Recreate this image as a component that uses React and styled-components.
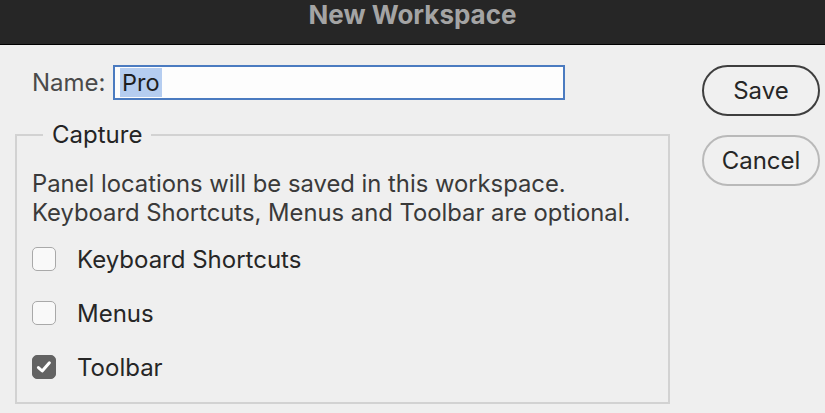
import React from "react";
import styled, { createGlobalStyle } from "styled-components";

const GlobalStyle = createGlobalStyle`
  html, body {
    margin: 0;
    padding: 0;
    background: #efefef;
  }
  #root {
    width: 825px;
    height: 413px;
    overflow: hidden;
  }
`;

const options = [
  { label: "Keyboard Shortcuts", checked: false },
  { label: "Menus", checked: false },
  { label: "Toolbar", checked: true },
];

const App = () => {
  return (
    <Wrapper>
      <GlobalStyle />
      <TitleBar>
        <span className="title">New Workspace</span>
      </TitleBar>
      <Content>
        <div className="left">
          <NameRow>
            <label>Name:</label>
            <NameField>
              <span className="selected">Pro</span>
            </NameField>
          </NameRow>
          <Capture>
            <legend>Capture</legend>
            <p className="desc">
              Panel locations will be saved in this workspace.
              <br />
              Keyboard Shortcuts, Menus and Toolbar are optional.
            </p>
            {options.map((opt) => (
              <OptionRow key={opt.label}>
                <Checkbox $checked={opt.checked}>
                  {opt.checked && (
                    <svg width="18" height="18" viewBox="0 0 18 18">
                      <path
                        d="M3.4 9.6 L7.2 13 L14.4 4.8"
                        fill="none"
                        stroke="#fff"
                        strokeWidth="3"
                        strokeLinecap="round"
                        strokeLinejoin="round"
                      />
                    </svg>
                  )}
                </Checkbox>
                <span>{opt.label}</span>
              </OptionRow>
            ))}
          </Capture>
        </div>
        <div className="right">
          <Button $primary>Save</Button>
          <Button>Cancel</Button>
        </div>
      </Content>
    </Wrapper>
  );
};

const Wrapper = styled.div`
  width: 825px;
  height: 413px;
  background: #efefef;
  font-family: "Inter", "Liberation Sans", sans-serif;
  color: #262626;
`;

const TitleBar = styled.div`
  height: 44px;
  background: #262626;
  border-bottom: 1px solid #000;
  display: flex;
  justify-content: center;
  align-items: flex-start;
  .title {
    font-size: 26px;
    font-weight: 700;
    color: #a4a4a4;
    line-height: 30px;
  }
`;

const Content = styled.div`
  display: flex;
  padding: 20px 0 0 15px;
  .left {
    width: 655px;
  }
  .right {
    margin-left: 32px;
    display: flex;
    flex-direction: column;
    gap: 19px;
  }
`;

const NameRow = styled.div`
  display: flex;
  align-items: center;
  padding-left: 17px;
  height: 35px;
  label {
    font-size: 24px;
    color: #4a4a4a;
    width: 81px;
  }
`;

const NameField = styled.div`
  box-sizing: border-box;
  width: 452px;
  height: 35px;
  border: 2px solid #4b7bc0;
  background: #fdfdfd;
  padding: 1px 5px;
  display: flex;
  align-items: stretch;
  .selected {
    background: #b5cdf0;
    font-size: 23.5px;
    line-height: 29px;
    padding: 0 2px;
    color: #1e1e1e;
  }
`;

const Capture = styled.fieldset`
  margin: 21px 0 0 0;
  padding: 0 0 0 15px;
  height: 283px;
  box-sizing: border-box;
  border: 2px solid #d2d2d2;
  legend {
    margin-left: 11px;
    padding: 0 9px;
    font-size: 24px;
    line-height: 28px;
    color: #242424;
  }
  .desc {
    margin: 20px 0 5px;
    font-size: 23.8px;
    line-height: 29px;
    color: #3a3a3a;
  }
`;

const OptionRow = styled.div`
  display: flex;
  align-items: center;
  height: 54px;
  font-size: 24px;
  color: #262626;
  span {
    margin-left: 21px;
  }
`;

const Checkbox = styled.div`
  box-sizing: border-box;
  width: 24px;
  height: 24px;
  border-radius: 5px;
  border: 1.5px solid ${({ $checked }) => ($checked ? "#636363" : "#a9a9a9")};
  background: ${({ $checked }) => ($checked ? "#636363" : "#f9f9f9")};
  display: flex;
  align-items: center;
  justify-content: center;
`;

const Button = styled.button`
  box-sizing: border-box;
  width: 118px;
  height: 51px;
  border-radius: 26px;
  border: 2px solid ${({ $primary }) => ($primary ? "#3e3e3e" : "#b9b9b9")};
  background: #f0f0f0;
  font-family: "Inter", "Liberation Sans", sans-serif;
  font-size: 24px;
  color: #262626;
  padding: 0;
`;

export default App;
